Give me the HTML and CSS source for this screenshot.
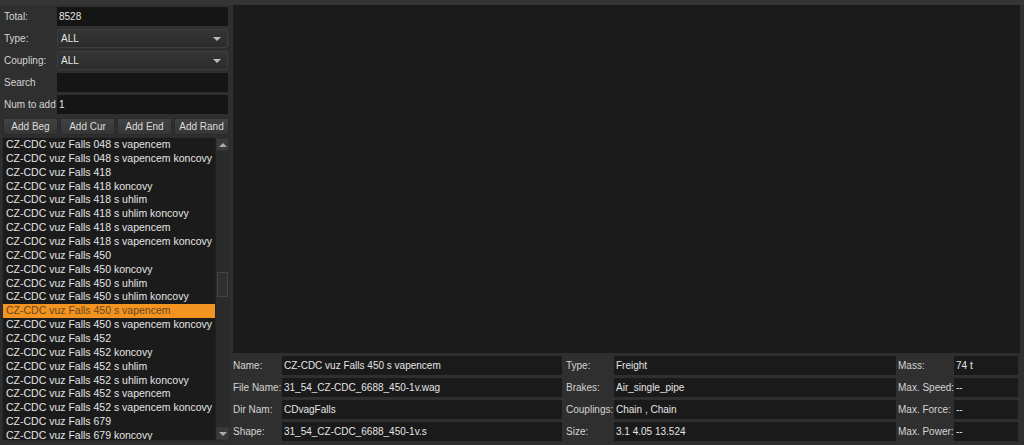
FILE: index.html
```html
<!DOCTYPE html>
<html lang="en">
<head>
  <meta charset="UTF-8" />
  <title>Consist Editor</title>
  <link rel="stylesheet" href="styles.css">
</head>
<body>

  <div class="topbar"></div>

  <div class="app">

    <!-- left: filters + wagon list -->
    <div class="side">
      <div class="field">
        <label>Total:</label>
        <div class="input">8528</div>
      </div>
      <div class="field">
        <label>Type:</label>
        <div class="combo">ALL<span class="arrow"></span></div>
      </div>
      <div class="field">
        <label>Coupling:</label>
        <div class="combo">ALL<span class="arrow"></span></div>
      </div>
      <div class="field">
        <label>Search</label>
        <div class="input"></div>
      </div>
      <div class="field">
        <label>Num to add</label>
        <div class="input">1</div>
      </div>

      <div class="buttons">
        <button>Add Beg</button>
        <button>Add Cur</button>
        <button>Add End</button>
        <button>Add Rand</button>
      </div>

      <div class="list">
        <ul class="items">
          <li>CZ-CDC vuz Falls 048 s vapencem</li>
          <li>CZ-CDC vuz Falls 048 s vapencem koncovy</li>
          <li>CZ-CDC vuz Falls 418</li>
          <li>CZ-CDC vuz Falls 418 koncovy</li>
          <li>CZ-CDC vuz Falls 418 s uhlim</li>
          <li>CZ-CDC vuz Falls 418 s uhlim koncovy</li>
          <li>CZ-CDC vuz Falls 418 s vapencem</li>
          <li>CZ-CDC vuz Falls 418 s vapencem koncovy</li>
          <li>CZ-CDC vuz Falls 450</li>
          <li>CZ-CDC vuz Falls 450 koncovy</li>
          <li>CZ-CDC vuz Falls 450 s uhlim</li>
          <li>CZ-CDC vuz Falls 450 s uhlim koncovy</li>
          <li class="selected">CZ-CDC vuz Falls 450 s vapencem</li>
          <li>CZ-CDC vuz Falls 450 s vapencem koncovy</li>
          <li>CZ-CDC vuz Falls 452</li>
          <li>CZ-CDC vuz Falls 452 koncovy</li>
          <li>CZ-CDC vuz Falls 452 s uhlim</li>
          <li>CZ-CDC vuz Falls 452 s uhlim koncovy</li>
          <li>CZ-CDC vuz Falls 452 s vapencem</li>
          <li>CZ-CDC vuz Falls 452 s vapencem koncovy</li>
          <li>CZ-CDC vuz Falls 679</li>
          <li>CZ-CDC vuz Falls 679 koncovy</li>
        </ul>
        <div class="scrollbar">
          <div class="sb-btn"><span class="tri up"></span></div>
          <div class="sb-track"><div class="sb-thumb"></div></div>
          <div class="sb-btn"><span class="tri down"></span></div>
        </div>
      </div>
    </div>

    <!-- right: 3d view + wagon details -->
    <div class="main">
      <div class="viewport"></div>

      <div class="info">
        <div class="lbl">Name:</div><div class="val">CZ-CDC vuz Falls 450 s vapencem</div>
        <div class="lbl">Type:</div><div class="val">Freight</div>
        <div class="lbl">Mass:</div><div class="val">74 t</div>

        <div class="lbl">File Name:</div><div class="val">31_54_CZ-CDC_6688_450-1v.wag</div>
        <div class="lbl">Brakes:</div><div class="val">Air_single_pipe</div>
        <div class="lbl">Max. Speed:</div><div class="val">--</div>

        <div class="lbl">Dir Nam:</div><div class="val">CDvagFalls</div>
        <div class="lbl">Couplings:</div><div class="val">Chain , Chain</div>
        <div class="lbl">Max. Force:</div><div class="val">--</div>

        <div class="lbl">Shape:</div><div class="val">31_54_CZ-CDC_6688_450-1v.s</div>
        <div class="lbl">Size:</div><div class="val">3.1 4.05 13.524</div>
        <div class="lbl">Max. Power:</div><div class="val">--</div>
      </div>
    </div>

  </div>

</body>
</html>
```

FILE: styles.css
```css
* {
  box-sizing: border-box;
  margin: 0;
  padding: 0;
}
body {
  background-color: #2f2f2f;
  color: #dcdcdc;
  font-family: 'Liberation Sans', Arial, sans-serif;
  font-size: 10px;
  height: 445px;
  overflow: hidden;
}
.topbar {
  height: 5px;
  background-color: #353535;
}
.app {
  display: grid;
  grid-template-columns: 231px 1fr;
  height: 440px;
}

/* ---- left side ---- */
.side {
  display: flex;
  flex-direction: column;
  padding-top: 1px;
}
.field {
  display: flex;
  align-items: center;
  height: 20px;
  margin-bottom: 2px;
}
.field label {
  width: 57px;
  padding-left: 4px;
  color: #d4d4d4;
}
.input, .combo {
  width: 171px;
  height: 19px;
  line-height: 19px;
  padding-left: 2px;
  color: #e6e6e6;
}
.input {
  background-color: #151515;
}
.combo {
  position: relative;
  padding-left: 3px;
  background: linear-gradient(#353535, #2c2c2c);
  border: 1px solid #3e3e3e;
  border-radius: 2px;
  line-height: 17px;
}
.arrow {
  position: absolute;
  right: 6px;
  top: 7px;
  border-left: 4px solid transparent;
  border-right: 4px solid transparent;
  border-top: 4px solid #bdbdbd;
}
.buttons {
  display: flex;
  gap: 2px;
  padding-left: 3px;
  margin-top: 2px;
}
.buttons button {
  width: 55px;
  height: 17px;
  font-family: inherit;
  font-size: 10px;
  color: #dcdcdc;
  background: linear-gradient(#424242, #363636);
  border: 1px solid #2a2a2a;
  border-radius: 2px;
}
.list {
  display: flex;
  margin: 2px 1px 0 2px;
  height: 304px;
  background-color: #1b1b1b;
  border: 1px solid #2a2a2a;
  overflow: hidden;
}
.items {
  list-style: none;
  flex: 1;
  overflow: hidden;
}
.items li {
  height: 13.86px;
  line-height: 13.86px;
  padding-left: 3px;
  font-size: 10.5px;
  color: #e4e4e4;
  white-space: nowrap;
}
.items li.selected {
  background-color: #f2941f;
  color: #6a4620;
}
.scrollbar {
  width: 14px;
  display: flex;
  flex-direction: column;
  background-color: #262626;
  border-left: 1px solid #202020;
}
.sb-btn {
  height: 13px;
  display: flex;
  align-items: center;
  justify-content: center;
  background-color: #3a3a3a;
  border: 1px solid #333;
}
.sb-track {
  flex: 1;
  padding-top: 121px;
  background-color: #2b2b2b;
}
.sb-thumb {
  height: 25px;
  margin: 0 1px;
  background-color: #303030;
  border: 1px solid #444;
}
.tri {
  border-left: 4px solid transparent;
  border-right: 4px solid transparent;
}
.tri.up {
  border-bottom: 4px solid #aaa;
}
.tri.down {
  border-top: 4px solid #aaa;
}

/* ---- right side ---- */
.main {
  display: flex;
  flex-direction: column;
  padding-right: 4px;
}
.viewport {
  flex: 1;
  margin-left: 2px;
  background-color: #1b1b1b;
}
.info {
  display: grid;
  grid-template-columns: 49px 280px 52px 282px 58px 64px;
  grid-auto-rows: 19px;
  row-gap: 3px;
  padding: 3px 0 4px 2px;
}
.lbl {
  line-height: 19px;
  color: #d4d4d4;
  white-space: nowrap;
}
.lbl:nth-child(6n+3), .lbl:nth-child(6n+5) {
  padding-left: 4px;
}
.lbl:nth-child(6n+5) {
  padding-left: 2px;
}
.val {
  line-height: 19px;
  padding-left: 2px;
  background-color: #1a1a1a;
  color: #e4e4e4;
  white-space: nowrap;
  overflow: hidden;
}
```
